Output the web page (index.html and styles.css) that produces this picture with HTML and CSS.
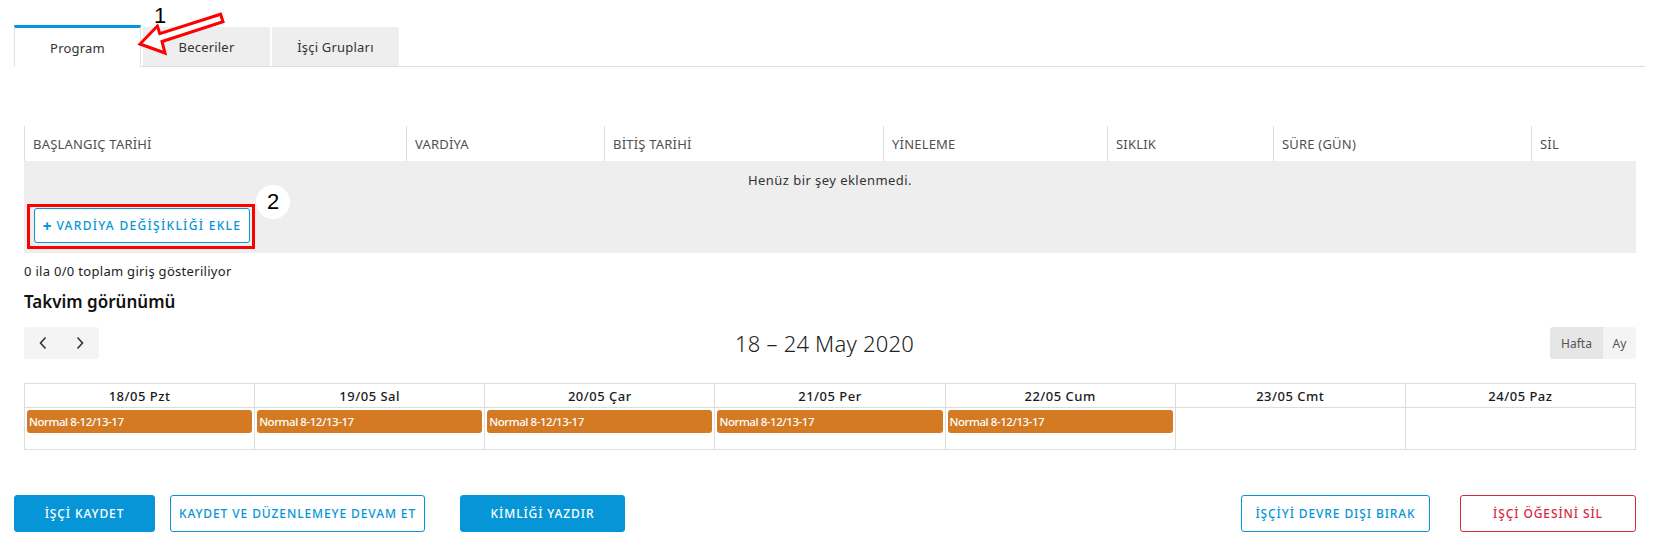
FILE: index.html
```html
<!DOCTYPE html>
<html lang="tr">
<head>
<meta charset="utf-8">
<title>Program</title>
<link rel="stylesheet" href="styles.css">
</head>
<body>
<div class="page">
  <div class="tabs">
    <div class="tab active">Program</div>
    <div class="tab">Beceriler</div>
    <div class="tab">İşçi Grupları</div>
    <svg class="anno-arrow" width="110" height="60" viewBox="0 0 110 60">
      <polygon points="6,39 31,48 28,36.5 89,16.8 86.6,9.2 25.8,28.6 23.4,21" fill="#fff" stroke="#f00" stroke-width="3" stroke-linejoin="miter"/>
    </svg>
    <span class="anno-num one">1</span>
  </div>

  <section class="list">
    <div class="tbl">
      <div class="thead">
        <div class="th c1">BAŞLANGIÇ TARİHİ</div>
        <div class="th c2">VARDİYA</div>
        <div class="th c3">BİTİŞ TARİHİ</div>
        <div class="th c4">YİNELEME</div>
        <div class="th c5">SIKLIK</div>
        <div class="th c6">SÜRE (GÜN)</div>
        <div class="th c7">SİL</div>
      </div>
      <div class="empty">Henüz bir şey eklenmedi.</div>
      <div class="addbar">
        <button class="btn-add"><span class="plus">+</span><span>VARDİYA DEĞİŞİKLİĞİ EKLE</span></button>
        <div class="anno-box"></div>
        <div class="anno-circle">2</div>
      </div>
    </div>
    <div class="info">0 ila 0/0 toplam giriş gösteriliyor</div>
  </section>

  <section class="cal">
    <h2 class="cal-title">Takvim görünümü</h2>
    <div class="toolbar">
      <div class="nav">
        <button class="nav-btn" aria-label="Önceki">
          <svg width="10" height="14" viewBox="0 0 10 14"><path d="M7.5 1.5 L2.5 7 L7.5 12.5" fill="none" stroke="#333" stroke-width="1.6"/></svg>
        </button>
        <button class="nav-btn" aria-label="Sonraki">
          <svg width="10" height="14" viewBox="0 0 10 14"><path d="M2.5 1.5 L7.5 7 L2.5 12.5" fill="none" stroke="#333" stroke-width="1.6"/></svg>
        </button>
      </div>
      <div class="range">18 – 24 May 2020</div>
      <div class="views">
        <button class="view on">Hafta</button>
        <button class="view">Ay</button>
      </div>
    </div>
    <div class="week">
      <div class="dh">18/05 Pzt</div>
      <div class="dh">19/05 Sal</div>
      <div class="dh">20/05 Çar</div>
      <div class="dh">21/05 Per</div>
      <div class="dh">22/05 Cum</div>
      <div class="dh">23/05 Cmt</div>
      <div class="dh">24/05 Paz</div>
      <div class="dc"><div class="ev">Normal 8-12/13-17</div></div>
      <div class="dc"><div class="ev">Normal 8-12/13-17</div></div>
      <div class="dc"><div class="ev">Normal 8-12/13-17</div></div>
      <div class="dc"><div class="ev">Normal 8-12/13-17</div></div>
      <div class="dc"><div class="ev">Normal 8-12/13-17</div></div>
      <div class="dc"></div>
      <div class="dc"></div>
    </div>
  </section>

  <div class="actions">
    <div class="grp">
      <button class="btn solid w1">İŞÇİ KAYDET</button>
      <button class="btn outline w2">KAYDET VE DÜZENLEMEYE DEVAM ET</button>
      <button class="btn solid w3">KİMLİĞİ YAZDIR</button>
    </div>
    <div class="grp right">
      <button class="btn outline w4">İŞÇİYİ DEVRE DIŞI BIRAK</button>
      <button class="btn danger w5">İŞÇİ ÖĞESİNİ SİL</button>
    </div>
  </div>
</div>
</body>
</html>
```

FILE: styles.css
```css
* { box-sizing: border-box; }
html, body { margin: 0; padding: 0; background: #fff; }
body {
  font-family: "Noto Sans", "Open Sans", sans-serif;
  color: #222;
  font-size: 12px;
}
button { font-family: inherit; cursor: pointer; }

.page { width: 1653px; }

/* Tabs */
.tabs {
  position: relative;
  display: flex;
  align-items: flex-end;
  gap: 2px;
  margin: 0 8px 0 14px;
  padding-top: 25px;
  border-bottom: 1px solid #dddddd;
}
.tab {
  width: 127px;
  height: 39px;
  background: #eeeeee;
  border-radius: 2px 2px 0 0;
  display: flex;
  align-items: center;
  justify-content: center;
  font-size: 13px;
  color: #333;
  letter-spacing: 0.2px;
}
.tab.active {
  height: 42px;
  margin-bottom: -1px;
  background: #fff;
  border-top: 3px solid #0696d7;
  border-left: 1px solid #e2e2e2;
  border-right: 1px solid #e2e2e2;
  border-radius: 0;
}
.anno-arrow {
  position: absolute;
  left: 120px;
  top: 5px;
}
.anno-num {
  position: absolute;
  font-family: "Liberation Sans", Arial, sans-serif;
  color: #000;
  font-size: 22px;
  line-height: 22px;
}
.anno-num.one { left: 140px; top: 5px; }

/* List table */
.list { margin: 59px 17px 0 24px; }
.tbl { width: 1612px; }
.thead {
  display: flex;
  height: 35px;
}
.th {
  border-left: 1px solid #dddddd;
  padding-left: 8px;
  display: flex;
  align-items: center;
  font-size: 13px;
  color: #505050;
  letter-spacing: 0.2px;
}
.c1 { width: 382px; }
.c2 { width: 198px; }
.c3 { width: 279px; }
.c4 { width: 224px; }
.c5 { width: 166px; }
.c6 { width: 258px; }
.c7 { width: 105px; }

.empty {
  background: #eeeeee;
  height: 37px;
  display: flex;
  align-items: center;
  justify-content: center;
  font-size: 13px;
  letter-spacing: 0.45px;
  color: #333;
}
.addbar {
  position: relative;
  background: #eeeeee;
  padding: 10px;
  height: 55px;
}
.btn-add {
  width: 216px;
  height: 35px;
  background: #fff;
  border: 1px solid #0696d7;
  border-radius: 3px;
  color: #0696d7;
  font-size: 12px;
  font-weight: 500;
  letter-spacing: 1.3px;
  padding: 0;
  display: flex;
  align-items: center;
  justify-content: center;
  gap: 5px;
}
.btn-add .plus { font-weight: 800; font-size: 15px; letter-spacing: 0; }
.anno-box {
  position: absolute;
  left: 3px;
  top: 6px;
  width: 228px;
  height: 45px;
  border: 3px solid #ff0000;
}
.anno-circle {
  position: absolute;
  left: 232px;
  top: -13px;
  width: 34px;
  height: 34px;
  border-radius: 50%;
  background: #fff;
  display: flex;
  align-items: center;
  justify-content: center;
  font-family: "Liberation Sans", Arial, sans-serif;
  font-size: 22px;
  color: #000;
}
.info {
  margin-top: 9px;
  line-height: 18px;
  font-size: 13px;
  letter-spacing: 0.3px;
  color: #222;
}

/* Calendar */
.cal { margin: 0 17px 0 24px; }
.cal-title {
  margin: 10px 0 0;
  font-size: 17px;
  line-height: 24px;
  font-weight: 600;
  color: #111;
}
.toolbar {
  margin-top: 13px;
  height: 32px;
  display: flex;
  align-items: center;
  justify-content: space-between;
}
.nav {
  display: flex;
  width: 75px;
  height: 32px;
  background: #f4f4f4;
  border-radius: 3px;
}
.nav-btn {
  flex: 1;
  border: 0;
  background: transparent;
  display: flex;
  align-items: center;
  justify-content: center;
  padding: 0;
}
.range {
  font-size: 22px;
  font-weight: 300;
  color: #222;
  letter-spacing: 0.2px;
}
.views {
  display: flex;
  height: 32px;
  border-radius: 3px;
  overflow: hidden;
}
.view {
  border: 0;
  background: #f4f4f4;
  color: #555;
  font-size: 12px;
  padding: 0;
  width: 33px;
}
.view.on { background: #e6e6e6; width: 53px; }

.week {
  margin-top: 24px;
  display: grid;
  grid-template-columns: repeat(7, 1fr);
  grid-template-rows: 24px 42px;
  border-top: 1px solid #dddddd;
  border-left: 1px solid #dddddd;
}
.dh, .dc {
  border-right: 1px solid #dddddd;
  border-bottom: 1px solid #dddddd;
}
.dh {
  display: flex;
  align-items: center;
  justify-content: center;
  font-size: 13px;
  font-weight: 500;
  color: #1a1a1a;
  letter-spacing: 0.5px;
}
.dc { padding: 2px 2px 0 2px; }
.ev {
  height: 23px;
  background: #d47a22;
  border-radius: 3px;
  color: #fff;
  font-size: 11.5px;
  font-weight: 500;
  letter-spacing: -0.45px;
  line-height: 23px;
  padding-left: 2px;
  white-space: nowrap;
  overflow: hidden;
}

/* Actions */
.actions {
  margin: 45px 17px 0 14px;
  display: flex;
  justify-content: space-between;
}
.grp { display: flex; }
.btn {
  height: 37px;
  border-radius: 3px;
  font-size: 12px;
  font-weight: 500;
  letter-spacing: 0.9px;
  padding: 0;
}
.btn.solid { background: #0696d7; border: 1px solid #0696d7; color: #fff; }
.btn.outline { background: #fff; border: 1px solid #0696d7; color: #0696d7; }
.btn.danger { background: #fff; border: 1px solid #d7283f; color: #d7283f; }
.w1 { width: 141px; }
.w2 { width: 255px; margin-left: 15px; }
.w3 { width: 165px; margin-left: 35px; }
.w4 { width: 189px; }
.w5 { width: 176px; margin-left: 30px; }
```
